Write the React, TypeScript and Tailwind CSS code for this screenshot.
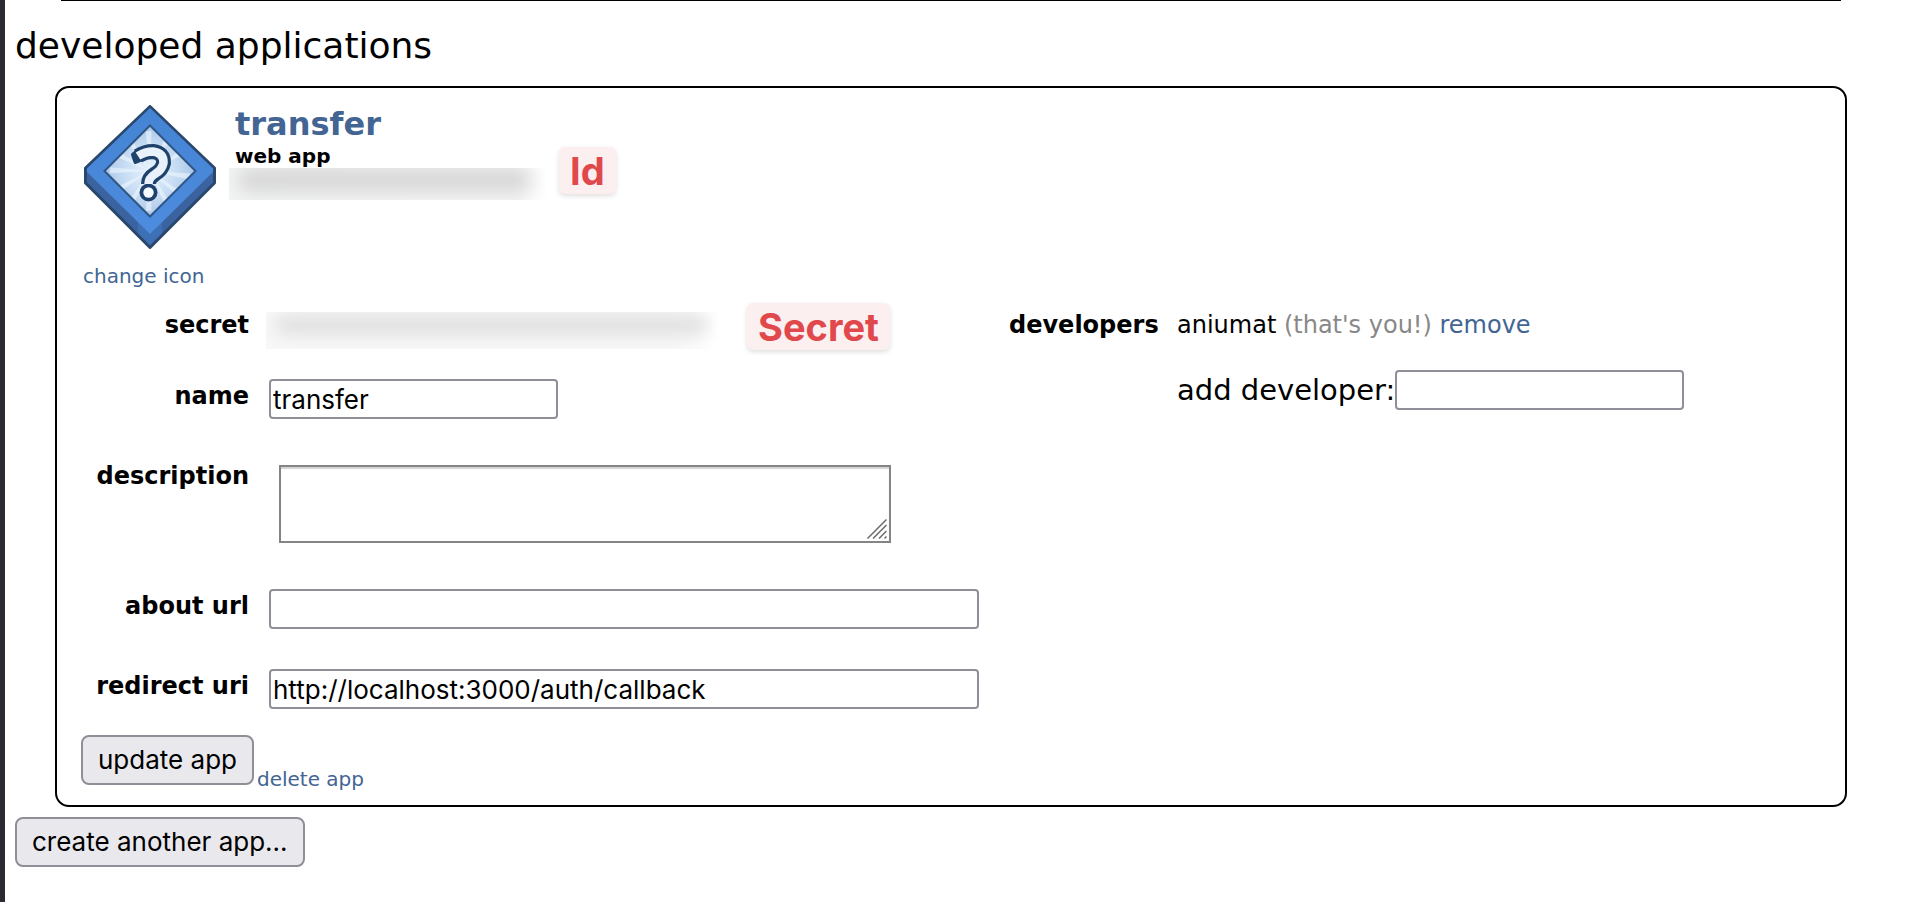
import type { ReactNode } from "react";

const link = "text-[#426594] hover:underline";
const box =
  "h-10 rounded-[4px] border-2 border-[#8f8f9a] bg-white px-[2px] font-['Inter',sans-serif] text-[26px] leading-[34px] outline-none";
const button =
  "h-[50px] rounded-[8px] border-2 border-[#8f8f9a] bg-[#e9e9ed] px-[15px] font-['Inter',sans-serif] text-[26px] leading-[34px] whitespace-nowrap";
const label = "w-[168px] shrink-0 text-right text-[24px] leading-[34px] font-bold";

function AppIcon() {
  const mark = "M54 51 Q61 46.500 69 46.500 Q80 48 79.500 58 Q78 65 71 69 Q64.500 73 64.500 79";
  const rays = [8, 38, 62, 92, 121, 150, 181, 207, 236, 268, 299, 330];
  return (
    <svg viewBox="0 0 132 144" className="ml-px h-36 w-[132px]" role="img" aria-label="transfer icon">
      <defs>
        <radialGradient id="pane">
          <stop offset="0" stopColor="#e6f2fd" />
          <stop offset="0.55" stopColor="#c9def4" />
          <stop offset="1" stopColor="#a9c5e9" />
        </radialGradient>
        <linearGradient id="face" x1="0" y1="0" x2="0" y2="1">
          <stop offset="0" stopColor="#4583d3" />
          <stop offset="1" stopColor="#4d8cde" />
        </linearGradient>
        <clipPath id="window">
          <path d="M66 21 111 66 66 111 21 66Z" />
        </clipPath>
      </defs>
      <path
        d="M66 1.500 130.500 63V78L66 142.500 1.500 78V63Z"
        fill="#3a63a0"
        stroke="#2a476c"
        strokeWidth="3"
        strokeLinejoin="round"
      />
      <path d="M54 117 66 128 78 117V128L66 140 54 128Z" fill="#3e70b5" />
      <path d="M66 3 129 63.500V67L66 129 3 67V63.500Z" fill="url(#face)" />
      <path d="M66 20.500 111.500 66 66 111.500 20.500 66Z" fill="url(#pane)" />
      <g clipPath="url(#window)" fill="#f2f9ff" opacity="0.55">
        {rays.map((angle) => (
          <path key={angle} d="M66 66 106 63V69Z" transform={`rotate(${angle} 66 66)`} />
        ))}
      </g>
      <path d="M66 20.500 111.500 66 66 111.500 20.500 66Z" fill="none" stroke="#2f5582" strokeWidth="2" />
      <g strokeLinejoin="round">
        <path d={mark} fill="none" stroke="#1f426d" strokeWidth="15" />
        <path d="M49 49.500 53.500 46 57.500 54.500 51.500 57Z" fill="#1f426d" stroke="#1f426d" strokeWidth="4" />
        <circle cx="64.500" cy="87.500" r="9" fill="#1f426d" />
        <path d={mark} fill="none" stroke="#e9f2fb" strokeWidth="8.500" />
        <circle cx="64.500" cy="87.500" r="5.200" fill="#f5faff" />
      </g>
    </svg>
  );
}

function Tag({ children }: { children: ReactNode }) {
  return (
    <span className="h-[47px] shrink-0 rounded-[6px] bg-[#fbeff0] px-[11px] font-['Inter',sans-serif] text-[38px] leading-[48px] font-bold text-[#e0484c] shadow-[0_2px_5px_rgba(0,0,0,0.13)]">
      {children}
    </span>
  );
}

function Field({ id, text, children }: { id: string; text: string; children: ReactNode }) {
  return (
    <div className="flex items-start gap-5">
      <label htmlFor={id} className={label}>
        {text}
      </label>
      {children}
    </div>
  );
}

export default function App() {
  return (
    <div className="min-h-screen border-l-[5px] border-[#2b2a33] bg-white font-['DejaVu_Sans',Verdana,sans-serif] text-black">
      <div className="mr-[75px] ml-[50px] h-4 overflow-hidden">
        <div className="mx-[6px] h-px bg-black" />
      </div>
      <h1 className="ml-[10px] text-[36px] leading-[60px]">developed applications</h1>

      <section className="mt-[10px] mr-[75px] ml-[50px] rounded-[14px] border-2 border-black pt-[17px] pr-6 pb-5 pl-6">
        <div className="flex items-start pl-[2px]">
          <div className="w-[152px] shrink-0">
            <AppIcon />
            <a href="#icon" className={`mt-[15px] block text-[20px] leading-6 whitespace-nowrap ${link}`}>
              change icon
            </a>
          </div>
          <div className="w-[324px] shrink-0">
            <h2 className="text-[32px] leading-[39px] font-bold">
              <a href="#app" className={link}>
                transfer
              </a>
            </h2>
            <div className="text-[20px] leading-6 font-bold">web app</div>
            <div className="-ml-[6px] h-8 w-[318px] overflow-hidden bg-gradient-to-r from-[#f3f4f4] via-[#f5f5f5] via-90% to-white">
              <div className="ml-[8px] h-6 w-[294px] rounded-full bg-[#d6d6d6] blur-[9px]" />
            </div>
          </div>
          <div className="flex pt-[42px]">
            <Tag>Id</Tag>
          </div>
        </div>

        <form className="mt-[15px]" onSubmit={(e) => e.preventDefault()}>
          <div className="flex items-start gap-[30px]">
            <div className="w-[898px] shrink-0">
              <div className="mb-[29px] flex items-start">
                <div className={`mt-[5px] ${label}`}>secret</div>
                <div className="mt-[9px] ml-[17px] h-[37px] w-[452px] overflow-hidden bg-gradient-to-r from-[#f8f8f8] via-[#f8f8f8] via-90% to-white">
                  <div className="mt-[2px] ml-[8px] h-[22px] w-[434px] rounded-full bg-[#e2e2e2] blur-[8px]" />
                </div>
                <div className="ml-[29px] flex">
                  <Tag>Secret</Tag>
                </div>
              </div>
              <div className="mb-10">
                <Field id="name" text="name">
                  <input id="name" type="text" defaultValue="transfer" className={`w-[289px] ${box}`} />
                </Field>
              </div>
              <div className="mb-[46px]">
                <Field id="description" text="description">
                  <div className="relative mt-[6px] ml-[10px] h-[78px] w-[612px]">
                    <textarea
                      id="description"
                      className="block h-full w-full resize-none border-2 border-[#858585] bg-white px-1 font-['Inter',sans-serif] text-[26px] shadow-[inset_0_2px_1px_#d4d4d4] outline-none"
                    />
                    <svg
                      viewBox="0 0 20 20"
                      className="pointer-events-none absolute right-1 bottom-1 size-5"
                      stroke="#6b6b6b"
                      strokeWidth="1.500"
                      aria-hidden="true"
                    >
                      <path d="M0.500 19.500 19.500 0.500M6 19.500 19.500 6M12 19.500 19.500 12M17.500 19.500 19.500 17.500" />
                    </svg>
                  </div>
                </Field>
              </div>
              <div className="mb-10">
                <Field id="about" text="about url">
                  <input id="about" type="text" className={`min-w-0 flex-1 ${box}`} />
                </Field>
              </div>
              <Field id="redirect" text="redirect uri">
                <input
                  id="redirect"
                  type="text"
                  defaultValue="http://localhost:3000/auth/callback"
                  className={`min-w-0 flex-1 ${box}`}
                />
              </Field>
            </div>

            <div className="flex gap-5 pt-[5px] whitespace-nowrap">
              <div className="w-[148px] shrink-0 text-right text-[24px] leading-[34px] font-bold">developers</div>
              <div>
                <div className="text-[24px] leading-[34px]">
                  aniumat <span className="text-[#888888]">(that's you!)</span>{" "}
                  <a href="#remove" className={link}>
                    remove
                  </a>
                </div>
                <div className="mt-7 flex items-center">
                  <label htmlFor="developer" className="text-[29px] leading-[40px]">
                    add developer:
                  </label>
                  <input id="developer" type="text" className={`w-[289px] ${box}`} />
                </div>
              </div>
            </div>
          </div>

          <div className="mt-[26px] flex items-end gap-[3px]">
            <button type="submit" className={button}>
              update app
            </button>
            <a href="#delete" className={`-mb-[6px] text-[20px] leading-6 ${link}`}>
              delete app
            </a>
          </div>
        </form>
      </section>

      <button type="button" className={`mt-[10px] ml-[10px] block ${button}`}>
        create another app...
      </button>
    </div>
  );
}
